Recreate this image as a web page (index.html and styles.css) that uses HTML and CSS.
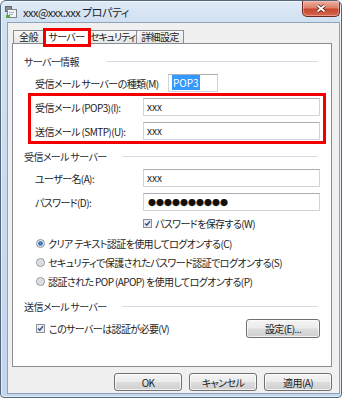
FILE: index.html
```html
<!DOCTYPE html>
<html lang="ja">
<head>
<meta charset="utf-8">
<title>xxx@xxx.xxx プロパティ</title>
<link rel="stylesheet" href="styles.css">
</head>
<body>
<div class="window">
  <div class="titlebar">
    <svg class="app-icon" viewBox="0 0 12 13" width="12" height="13">
      <rect x="0.5" y="0.5" width="6" height="5" fill="#8a9098" stroke="#5f656d"/>
      <rect x="2.5" y="3.5" width="9" height="8" fill="#f4f6f8" stroke="#7d848c"/>
      <rect x="4" y="6" width="5" height="1" fill="#aab0b7"/>
      <rect x="4" y="8" width="4" height="1" fill="#aab0b7"/>
      <rect x="1" y="9" width="4" height="3" fill="#59a545"/>
    </svg>
    <span class="title">xxx@xxx.xxx プロパティ</span>
    <button class="close" type="button" aria-label="閉じる">
      <svg viewBox="0 0 12 9" width="12" height="9">
        <path d="M2.5 1.5 L9.5 7.5 M9.5 1.5 L2.5 7.5" stroke="#4a1d16" stroke-width="3.4" fill="none"/>
        <path d="M2.5 1.5 L9.5 7.5 M9.5 1.5 L2.5 7.5" stroke="#ffffff" stroke-width="1.8" fill="none"/>
      </svg>
    </button>
  </div>
  <div class="client">
    <div class="tabs">
      <div class="tab tab-general">全般</div>
      <div class="tab tab-active">サーバー</div>
      <div class="tab tab-security">セキュリティ</div>
      <div class="tab tab-advanced">詳細設定</div>
    </div>
    <div class="panel">
      <div class="group-head"><span>サーバー情報</span><span class="rule rule-long"></span></div>
      <div class="row row-type">
        <span class="label">受信メール サーバーの種類(M)</span>
        <span class="field"><span class="sel">POP3</span></span>
      </div>
      <div class="highlight">
        <div class="row"><span class="label">受信メール (POP3)(I):</span><span class="field">xxx</span></div>
        <div class="row"><span class="label">送信メール (SMTP)(U):</span><span class="field">xxx</span></div>
      </div>
      <div class="group-head gh-2"><span>受信メール サーバー</span><span class="rule rule-short"></span></div>
      <div class="row row-user"><span class="label">ユーザー名(A):</span><span class="field">xxx</span></div>
      <div class="row row-pass"><span class="label">パスワード(D):</span><span class="field"><span class="dots">●●●●●●●●●●</span></span></div>
      <div class="opt opt-save">
        <svg class="box" viewBox="0 0 9 9" width="9" height="9"><rect x="0.5" y="0.5" width="8" height="8" fill="#e9edf2" stroke="#8e9096"/><path d="M2 4.4 L3.8 6.3 L7 2.2" fill="none" stroke="#3a4f84" stroke-width="1.4"/></svg>
        <span>パスワードを保存する(W)</span>
      </div>
      <div class="opt opt-radio opt-r1">
        <svg class="box" viewBox="0 0 9 9" width="9" height="9"><circle cx="4.5" cy="4.5" r="4" fill="#e6eaef" stroke="#8e9096"/><circle cx="4.5" cy="4.5" r="2.3" fill="#2d62b4"/><circle cx="4.5" cy="4.5" r="1" fill="#5c93dc"/></svg>
        <span>クリア テキスト認証を使用してログオンする(C)</span>
      </div>
      <div class="opt opt-radio">
        <svg class="box" viewBox="0 0 9 9" width="9" height="9"><circle cx="4.5" cy="4.5" r="4" fill="#e8ebef" stroke="#8e9096"/><circle cx="4.5" cy="4.5" r="2.6" fill="#d7dce2"/></svg>
        <span>セキュリティで保護されたパスワード認証でログオンする(S)</span>
      </div>
      <div class="opt opt-radio">
        <svg class="box" viewBox="0 0 9 9" width="9" height="9"><circle cx="4.5" cy="4.5" r="4" fill="#e8ebef" stroke="#8e9096"/><circle cx="4.5" cy="4.5" r="2.6" fill="#d7dce2"/></svg>
        <span>認証された POP (APOP) を使用してログオンする(P)</span>
      </div>
      <div class="group-head gh-3"><span>送信メール サーバー</span><span class="rule rule-short"></span></div>
      <div class="auth-row">
        <div class="opt opt-auth">
          <svg class="box" viewBox="0 0 9 9" width="9" height="9"><rect x="0.5" y="0.5" width="8" height="8" fill="#e9edf2" stroke="#8e9096"/><path d="M2 4.4 L3.8 6.3 L7 2.2" fill="none" stroke="#3a4f84" stroke-width="1.4"/></svg>
          <span>このサーバーは認証が必要(V)</span>
        </div>
        <button class="btn btn-settings" type="button">設定(E)...</button>
      </div>
    </div>
    <div class="actions">
      <button class="btn" type="button">OK</button>
      <button class="btn" type="button">キャンセル</button>
      <button class="btn" type="button">適用(A)</button>
    </div>
  </div>
</div>
</body>
</html>
```
FILE: styles.css
```css
* { box-sizing: border-box; }
html, body { margin: 0; padding: 0; background: #ffffff; }
body {
  font-family: "Noto Sans CJK JP", "Noto Sans", sans-serif;
  font-size: 10px;
  letter-spacing: -0.6px;
  color: #1c1c1c;
  font-feature-settings: "palt";
}
button { font: inherit; color: inherit; letter-spacing: inherit; }

.window {
  width: 342px;
  height: 398px;
  border: 1px solid #55677c;
  border-radius: 6px 6px 4px 4px;
  background: linear-gradient(180deg, #dfeaf6 0, #cfe0f1 22px, #c2d6ec 100%);
  box-shadow: inset 0 0 0 1px rgba(255,255,255,0.55);
  display: flex;
  flex-direction: column;
  overflow: hidden;
}

.titlebar {
  height: 21px;
  display: flex;
  align-items: center;
  padding-left: 4px;
}
.app-icon { display: block; margin-top: 1px; }
.title { margin-left: 6px; font-size: 11px; letter-spacing: -0.5px; color: #1e1e1e; }
.close {
  margin-left: auto;
  margin-right: 1px;
  align-self: flex-start;
  width: 38px;
  height: 16px;
  padding: 0;
  border: 1px solid #6a2a22;
  border-top: none;
  border-radius: 0 0 5px 5px;
  background: linear-gradient(180deg, #ecae9f 0, #de8168 45%, #c8472f 55%, #d46a50 100%);
  box-shadow: inset 0 0 0 1px rgba(255,210,200,0.45);
  display: flex;
  align-items: center;
  justify-content: center;
}
.close svg { display: block; }

.client {
  flex: 1;
  margin: 0 1px 3px 6px;
  background: #f0f0f0;
  border: 1px solid #8ea3bb;
  display: flex;
  flex-direction: column;
}

.tabs {
  height: 20px;
  display: flex;
  align-items: flex-end;
  padding-left: 5px;
  position: relative;
  z-index: 1;
}
.tab {
  height: 13px;
  line-height: 12px;
  padding: 0;
  text-align: center;
  border: 1px solid #898c95;
  border-bottom: none;
  background: linear-gradient(180deg, #f8f8f8, #e6e6e6);
  white-space: nowrap;
  overflow: hidden;
}
.tab-general { width: 31px; }
.tab-active {
  position: relative;
  width: 47px;
  height: 16px;
  line-height: 15px;
  margin: 0 -1px -1px -1px;
  background: #ffffff;
  z-index: 2;
  overflow: visible;
}
.tab-active::after {
  content: "";
  position: absolute;
  left: -1px;
  top: -1px;
  right: -2px;
  bottom: -3px;
  border: 3px solid #f20000;
}
.tab-security { width: 48px; border-left: none; letter-spacing: -1.1px; }
.tab-advanced { width: 47px; border-left: none; }

.panel {
  height: 324px;
  margin: 0 7px 0 4px;
  background: #ffffff;
  border: 1px solid #898c95;
  padding: 9px 11px 0;
}

.group-head {
  height: 16px;
  display: flex;
  align-items: center;
  color: #1e2b3c;
}
.rule { margin-left: auto; margin-right: 2px; height: 1px; background: #d3dbe4; }
.rule-long { width: 211px; }
.rule-short { width: 196px; }
.gh-2 { margin-top: 4px; }
.gh-3 { margin-top: 10px; }

.row {
  display: grid;
  grid-template-columns: 108px 177px;
  align-items: center;
  height: 18px;
  padding-left: 11px;
}
.row-type { grid-template-columns: 133px 50px; margin-top: 5px; }
.row-user { margin-top: 5px; }
.row-pass { margin-top: 6px; }
.label { white-space: nowrap; }
.field {
  height: 18px;
  line-height: 16px;
  padding-left: 3px;
  border: 1px solid #d0d5dc;
  border-top-color: #abadb3;
  background: #ffffff;
  white-space: nowrap;
  letter-spacing: 0;
}
.sel { background: #3399ff; color: #ffffff; padding: 0 1px; }
.dots { font-size: 8px; letter-spacing: 0; color: #111; padding-left: 1px; }

.highlight {
  margin: 1px -6px 0 4px;
  border: 3px solid #f20000;
  padding: 2px 2px 1px 0;
  display: flex;
  flex-direction: column;
  gap: 6px;
}
.highlight .row { padding-left: 4px; }

.opt {
  display: flex;
  align-items: center;
  gap: 3px;
  height: 14px;
  white-space: nowrap;
}
.opt .box { display: block; flex: none; }
.opt-save { margin-top: 5px; padding-left: 119px; }
.opt-radio { margin-top: 5px; padding-left: 12px; }
.opt-r1 { margin-top: 6px; }

.auth-row {
  margin-top: 5px;
  height: 19px;
  display: flex;
  align-items: center;
  justify-content: space-between;
}
.opt-auth { padding-left: 12px; gap: 4px; }

.btn {
  height: 18px;
  width: 68px;
  padding: 0;
  border: 1px solid #707070;
  border-radius: 3px;
  background: linear-gradient(180deg, #f4f4f4 0, #ebebeb 48%, #dcdcdc 52%, #cfcfcf 100%);
  box-shadow: inset 0 0 0 1px rgba(255,255,255,0.7);
  text-align: center;
  line-height: 15px;
}
.btn-settings { width: 74px; height: 19px; line-height: 16px; }

.actions {
  display: flex;
  justify-content: flex-end;
  gap: 7px;
  padding-right: 7px;
  margin-top: 6px;
}
```
